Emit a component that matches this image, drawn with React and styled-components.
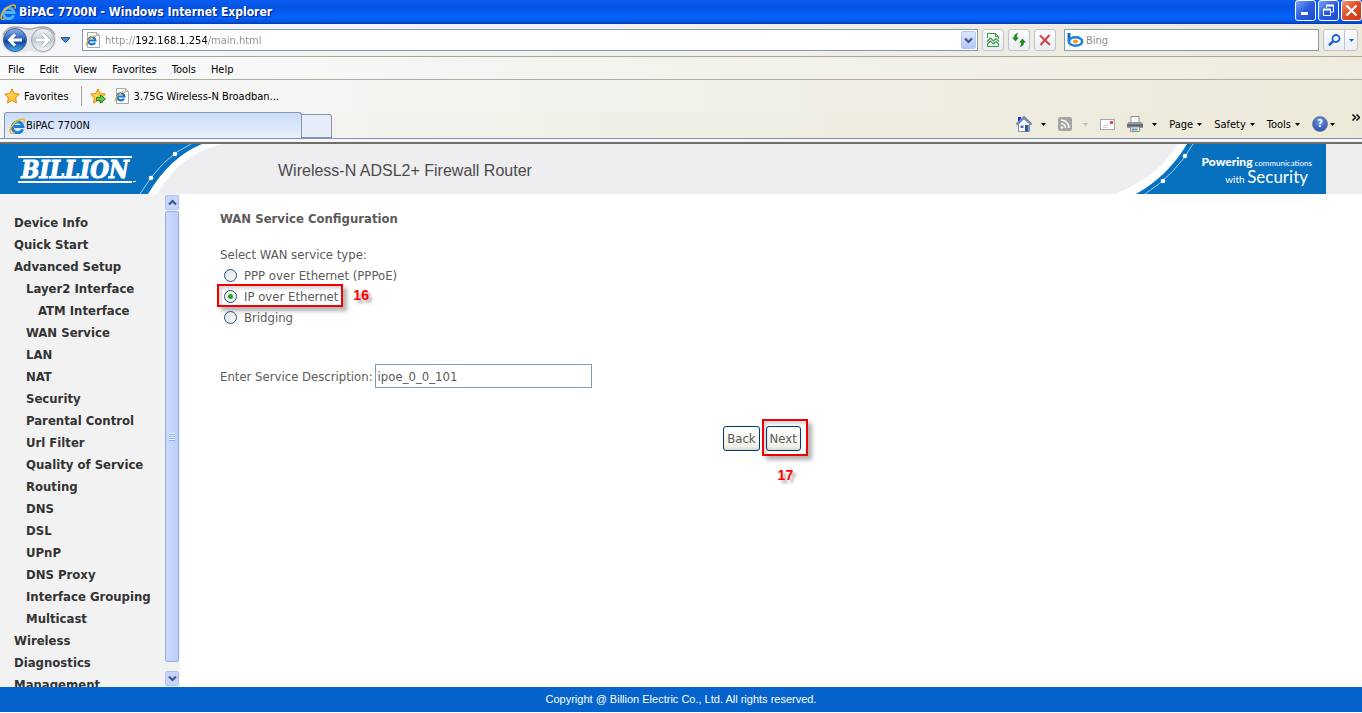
import { useState } from "react";
import styled, { createGlobalStyle } from "styled-components";

const tahoma = `"DejaVu Sans Condensed", "Noto Sans", sans-serif`;
const arial = `"Liberation Sans", sans-serif`;

const menus = ["File", "Edit", "View", "Favorites", "Tools", "Help"];

const sideLinks = [
  { name: "Device Info", level: 0 },
  { name: "Quick Start", level: 0 },
  { name: "Advanced Setup", level: 0 },
  { name: "Layer2 Interface", level: 1 },
  { name: "ATM Interface", level: 2 },
  { name: "WAN Service", level: 1 },
  { name: "LAN", level: 1 },
  { name: "NAT", level: 1 },
  { name: "Security", level: 1 },
  { name: "Parental Control", level: 1 },
  { name: "Url Filter", level: 1 },
  { name: "Quality of Service", level: 1 },
  { name: "Routing", level: 1 },
  { name: "DNS", level: 1 },
  { name: "DSL", level: 1 },
  { name: "UPnP", level: 1 },
  { name: "DNS Proxy", level: 1 },
  { name: "Interface Grouping", level: 1 },
  { name: "Multicast", level: 1 },
  { name: "Wireless", level: 0 },
  { name: "Diagnostics", level: 0 },
  { name: "Management", level: 0 },
];

const services = [
  { id: "pppoe", label: "PPP over Ethernet (PPPoE)" },
  { id: "ipoe", label: "IP over Ethernet", step: "16" },
  { id: "bridge", label: "Bridging" },
];

const IeIcon = ({ color = "#1b7fd6" }) => (
  <svg width="16" height="16" viewBox="0 0 16 16" fill="none">
    <path d="M13.700 11.200A5.400 5.400 0 1 1 14 8.600H5" stroke={color} strokeWidth="3" />
    <path d="M4.200 6.200A4.400 4.400 0 0 1 8.600 3.200" stroke="#a6dcfa" strokeWidth="1" />
    <path
      d="M1.600 15C-.4 12.500 3 6.500 8 3.200 11.500.8 15 .2 15.300 2.200c.1.800-.3 1.700-.8 2.500"
      stroke="#f0b323"
      strokeWidth="1.500"
    />
    <path d="M1.600 15c1 .7 2.700.2 4-.8" stroke="#f0b323" strokeWidth="1.300" />
  </svg>
);

const PageIcon = () => (
  <svg width="16" height="16" viewBox="0 0 16 16" fill="none">
    <path d="M2.500.5h9l3 3v12h-12z" fill="#fff" stroke="#a3a9b3" />
    <path d="M11.500.5v3h3" stroke="#a3a9b3" />
    <path d="M10 10.500A3.600 3.600 0 1 1 10.400 8.500H4" stroke="#1b74d0" strokeWidth="2.200" />
    <path d="M1.400 13.500C.5 11.500 3 7.500 6.500 5.200c2.500-1.700 4.500-1.700 4.300-.2" stroke="#efb128" strokeWidth="1.200" />
  </svg>
);

const StarIcon = ({ arrow }) => (
  <svg width="16" height="16" viewBox="0 0 16 16">
    <path
      d="M8 .8l2.200 4.700 5.200.7-3.800 3.600.9 5.200L8 12.500 3.500 15l.9-5.200L.6 6.200l5.200-.7z"
      fill="#ffc63a"
      stroke="#d98c14"
    />
    <path d="M8 3L6.700 6.500 3.500 7 7 7.800z" fill="#fff0a8" />
    {arrow && <path d="M6.500 9.500h4v-2.500l5 4-5 4v-2.500h-4z" fill="#5fd04b" stroke="#1c8a1c" />}
  </svg>
);

const NavCircles = () => (
  <svg width="56" height="30" viewBox="0 0 56 30" fill="none">
    <defs>
      <linearGradient id="backFill" x1="0" y1="0" x2="0" y2="1">
        <stop offset="0" stopColor="#8fb4e8" />
        <stop offset=".45" stopColor="#2a63bd" />
        <stop offset=".55" stopColor="#123f96" />
        <stop offset="1" stopColor="#46b0ef" />
      </linearGradient>
      <linearGradient id="nextFill" x1="0" y1="0" x2="0" y2="1">
        <stop offset="0" stopColor="#f6f8fa" />
        <stop offset=".5" stopColor="#c3cbd3" />
        <stop offset="1" stopColor="#f8fafc" />
      </linearGradient>
    </defs>
    <path
      d="M13 2C22 2 22 4 28 4S34 2 42 2a13 13 0 0 1 0 26C34 28 33 26 28 26S22 28 14 28A13 13 0 0 1 13 2z"
      fill="#e3e5e8"
    />
    <path d="M2 10C5 4 9 2 14 2c8 0 8 2 14 2s6-2 14-2c5 0 9 2 12 8" stroke="#a3a6aa" strokeWidth="1.500" />
    <circle cx="14" cy="15" r="11.500" fill="url(#backFill)" stroke="#3a659e" />
    <circle cx="42" cy="15" r="11.500" fill="url(#nextFill)" stroke="#9aa2ab" />
    <path d="M21 15H9M14 9.500L8.500 15l5.500 5.500" stroke="#fff" strokeWidth="3" />
    <path d="M35 15h12M42 9.500l5.500 5.500-5.500 5.500" stroke="#9aa2ab" strokeWidth="4" />
    <path d="M35 15h12M42 9.500l5.500 5.500-5.500 5.500" stroke="#fff" strokeWidth="2.800" />
  </svg>
);

const Chevron = ({ up }) => (
  <svg width="9" height="7" viewBox="0 0 9 7" fill="none">
    <path d={up ? "M1 5.500l3.500-3.500L8 5.500" : "M1 1.500L4.500 5 8 1.500"} stroke="#42598c" strokeWidth="2.200" />
  </svg>
);

const Caret = ({ color = "#000" }) => (
  <svg width="5" height="3" viewBox="0 0 5 3">
    <path d="M0 0h5L2.500 3z" fill={color} />
  </svg>
);

const RecentIcon = () => (
  <svg width="9" height="6" viewBox="0 0 9 6">
    <path d="M.5.500h8v1L4.500 5.500l-4-4z" fill="#3f8fd0" stroke="#1b4f86" />
  </svg>
);

const BrokenPageIcon = () => (
  <svg width="14" height="16" viewBox="0 0 14 16" fill="none" stroke="#3b9a3f">
    <path d="M1.500 6V1.500h8l3 3V7M9.500 1.500v3h3" />
    <path d="M1 9.500l3.500-3.500 3 3L10 6.500l3 3M1 12.500L4.500 9l3 3L10 9.500l3 3" strokeWidth="1.200" />
    <path d="M1.500 12v2.500h11V12" />
  </svg>
);

const RefreshIcon = () => (
  <svg width="14" height="14" viewBox="0 0 14 14" fill="#23892a">
    <path d="M6.500 0C3.500.3 2 2 2 4.500H0L3.500 8.500 7 4.500H5C4.800 2.500 5.200 1.200 6.500 0z" />
    <path d="M7.500 14c3-.3 4.500-2 4.500-4.500H14L10.500 5.500 7 9.500h2c.2 2-.2 3.300-1.500 4.500z" />
  </svg>
);

const StopIcon = () => (
  <svg width="12" height="12" viewBox="0 0 12 12" fill="none">
    <path d="M1 1.500l10 9.500M10.500 1L1.500 11" stroke="#cf4343" strokeWidth="2" />
  </svg>
);

const BingIcon = () => (
  <svg width="17" height="14" viewBox="0 0 17 14" fill="none">
    <path d="M2 0v8.500" stroke="#1767cf" strokeWidth="3" />
    <ellipse cx="8.500" cy="8.500" rx="6.700" ry="4.200" stroke="#1c82dc" strokeWidth="2.500" />
    <ellipse cx="8.500" cy="8.500" rx="2.600" ry="2" fill="#f59a1c" />
  </svg>
);

const SearchIcon = () => (
  <svg width="13" height="12" viewBox="0 0 13 12" fill="none" stroke="#1c5fd6">
    <circle cx="8" cy="4.500" r="3.500" strokeWidth="1.800" />
    <path d="M5.300 7L1 11.300" strokeWidth="2.500" />
  </svg>
);

const HomeIcon = () => (
  <svg width="16" height="16" viewBox="0 0 16 16">
    <path d="M2 1h3v5H2z" fill="#2433d0" />
    <path d="M2.500 8L8 3l5.500 5v7.500h-11z" fill="#fff" stroke="#7f8db0" />
    <path d="M.5 8.500L8 1l7.500 7.500" fill="none" stroke="#6d86b8" strokeWidth="2" />
    <path d="M9 9h3.500v6.500H9z" fill="#33559c" />
    <path d="M4.500 9.500h3v2.500h-3z" fill="#4a6bb4" />
  </svg>
);

const FeedIcon = () => (
  <svg width="14" height="14" viewBox="0 0 14 14" fill="none">
    <rect width="14" height="14" rx="2" fill="#a5a5a3" />
    <circle cx="4" cy="10.500" r="1.300" fill="#fff" />
    <path d="M3 6.500a4.500 4.500 0 0 1 4.500 4.500M3 3a8 8 0 0 1 8 8" stroke="#fff" strokeWidth="1.500" />
  </svg>
);

const MailIcon = () => (
  <svg width="15" height="11" viewBox="0 0 15 11" fill="none">
    <rect x=".5" y=".5" width="14" height="10" fill="#fdfdfd" stroke="#a7a7b0" />
    <path d="M3 6.500h5M3 8.500h4" stroke="#d4d4da" />
    <path d="M10 2h3v3h-3z" fill="#d9534f" />
  </svg>
);

const PrintIcon = () => (
  <svg width="16" height="16" viewBox="0 0 16 16">
    <path d="M4 .5h8V7H4z" fill="#fff" stroke="#8a8f98" />
    <path d="M1.500 6h13L16 8v4H0V8z" fill="#9599a0" />
    <path d="M0 8.500h16v2H0z" fill="#5b5f66" />
    <path d="M3.500 11h9v4.500h-9z" fill="#fff" stroke="#8a8f98" />
    <path d="M5 12.500h2.500v2H5z" fill="#3b76c8" />
    <path d="M8 12.500h2.500v2H8z" fill="#49a64b" />
  </svg>
);

const MinimizeIcon = () => (
  <svg width="13" height="13" viewBox="0 0 13 13">
    <path d="M2 8h7v3H2z" fill="#fff" />
  </svg>
);

const RestoreIcon = () => (
  <svg width="13" height="13" viewBox="0 0 13 13" fill="none" stroke="#fff">
    <path d="M4.500 4V1.500h7V8H9" />
    <path d="M4 1.500h8" strokeWidth="2" />
    <path d="M1.500 5.500h7v6h-7z" />
    <path d="M1 5.500h8" strokeWidth="2" />
  </svg>
);

const CloseIcon = () => (
  <svg width="13" height="13" viewBox="0 0 13 13" fill="none">
    <path d="M1.500 1.500l10 10M11.500 1.500l-10 10" stroke="#fff" strokeWidth="2.200" />
  </svg>
);

const App = () => {
  const [service, setService] = useState("ipoe");
  const [description, setDescription] = useState("ipoe_0_0_101");
  const [url, setUrl] = useState("http://192.168.1.254/main.html");

  return (
    <Window>
      <GlobalStyle />
      <TitleBar>
        <IeIcon color="#4fb4f2" />
        <WindowTitle>BiPAC 7700N - Windows Internet Explorer</WindowTitle>
        <WindowButton aria-label="Minimize">
          <MinimizeIcon />
        </WindowButton>
        <WindowButton aria-label="Restore">
          <RestoreIcon />
        </WindowButton>
        <WindowButton aria-label="Close" $danger>
          <CloseIcon />
        </WindowButton>
      </TitleBar>

      <NavBar>
        <NavCircles />
        <RecentButton aria-label="Recent pages">
          <RecentIcon />
        </RecentButton>
        <AddressBox>
          <PageIcon />
          <UrlInput aria-label="Address" value={url} onChange={(e) => setUrl(e.target.value)} />
          <DropButton aria-label="Show addresses">
            <Chevron />
          </DropButton>
        </AddressBox>
        <ToolButton aria-label="Compatibility view">
          <BrokenPageIcon />
        </ToolButton>
        <ToolButton aria-label="Refresh">
          <RefreshIcon />
        </ToolButton>
        <ToolButton aria-label="Stop">
          <StopIcon />
        </ToolButton>
        <SearchBox>
          <BingIcon />
          <SearchInput aria-label="Search" placeholder="Bing" />
        </SearchBox>
        <SearchButtons>
          <SearchButton aria-label="Search">
            <SearchIcon />
          </SearchButton>
          <SearchButton aria-label="Search options" $narrow>
            <Caret color="#1c5fd6" />
          </SearchButton>
        </SearchButtons>
      </NavBar>

      <MenuBar>
        {menus.map((menu) => (
          <PlainButton key={menu}>{menu}</PlainButton>
        ))}
      </MenuBar>

      <FavoritesBar>
        <PlainButton>
          <StarIcon />
          Favorites
        </PlainButton>
        <Separator />
        <PlainButton aria-label="Add to favorites">
          <StarIcon arrow />
        </PlainButton>
        <BarLink href="#broadband">
          <PageIcon />
          3.75G Wireless-N Broadban...
        </BarLink>
      </FavoritesBar>

      <TabBar>
        <Tab>
          <IeIcon />
          BiPAC 7700N
        </Tab>
        <NewTab aria-label="New tab" />
        <Commands>
          <CommandButton aria-label="Home" $gap={9}>
            <HomeIcon />
            <Caret />
          </CommandButton>
          <CommandButton aria-label="Feeds" $gap={11}>
            <FeedIcon />
            <Caret color="#b9b7ab" />
          </CommandButton>
          <CommandButton aria-label="Read mail">
            <MailIcon />
          </CommandButton>
          <CommandButton aria-label="Print" $gap={9}>
            <PrintIcon />
            <Caret />
          </CommandButton>
          <CommandButton>
            Page
            <Caret />
          </CommandButton>
          <CommandButton>
            Safety
            <Caret />
          </CommandButton>
          <CommandButton>
            Tools
            <Caret />
          </CommandButton>
          <CommandButton aria-label="Help" $gap={2}>
            <HelpBall>?</HelpBall>
            <Caret />
          </CommandButton>
        </Commands>
        <MoreButton aria-label="More commands">
          <svg width="8" height="7" viewBox="0 0 8 7" fill="none" stroke="#000" strokeWidth="1.500">
            <path d="M.5.500l3 3-3 3M4.500.500l3 3-3 3" />
          </svg>
        </MoreButton>
      </TabBar>

      <Header>
        <Brand>
          <BannerArt width="226" height="50" viewBox="0 0 226 50" fill="none">
            <path d="M0 0h222Q180 10 157 50H0z" fill="#fff" />
            <path d="M0 0h202Q170 13 148 50H0z" fill="#0771c0" />
            <path d="M191 0Q162 13 140 50" stroke="#9fd0f0" />
            <circle cx="175" cy="10" r="2.300" fill="#fff" />
            <circle cx="151" cy="34" r="2.300" fill="#fff" />
            <path d="M133 37.500h3" stroke="#fff" />
          </BannerArt>
          <Logo>BILLION</Logo>
        </Brand>
        <ProductName>Wireless-N ADSL2+ Firewall Router</ProductName>
        <Slogan>
          <BannerArt width="211" height="50" viewBox="0 0 211 50" fill="none">
            <path d="M0 50Q44 32 63 0h148v50z" fill="#fff" />
            <path d="M21 50Q53 32 72 0h139v50z" fill="#0771c0" />
            <path d="M30 50Q61 30 78 0" stroke="#9fd0f0" />
            <circle cx="70" cy="12" r="2.300" fill="#fff" />
            <circle cx="48" cy="37" r="2.300" fill="#fff" />
          </BannerArt>
          <SloganLine>
            <b>Powering</b> communications
          </SloganLine>
          <SloganLine $low>
            with <big>Security</big>
          </SloganLine>
        </Slogan>
      </Header>

      <Body>
        <SideMenu>
          {sideLinks.map(({ name, level }) => (
            <SideLink key={name} href="#menu" $level={level}>
              {name}
            </SideLink>
          ))}
        </SideMenu>
        <ScrollBar>
          <ScrollButton aria-label="Scroll up">
            <Chevron up />
          </ScrollButton>
          <Thumb>
            <Grip />
          </Thumb>
          <ScrollButton aria-label="Scroll down">
            <Chevron />
          </ScrollButton>
        </ScrollBar>

        <Content>
          <Heading>WAN Service Configuration</Heading>
          <Options>
            <legend>Select WAN service type:</legend>
            {services.map(({ id, label, step }) => (
              <Option key={id}>
                <Radio
                  type="radio"
                  name="service"
                  id={id}
                  checked={service === id}
                  onChange={() => setService(id)}
                />
                <label htmlFor={id}>{label}</label>
                {step && <OptionMark />}
                {step && <OptionStep>{step}</OptionStep>}
              </Option>
            ))}
          </Options>
          <Field>
            <label htmlFor="description">Enter Service Description:</label>
            <TextInput id="description" value={description} onChange={(e) => setDescription(e.target.value)} />
          </Field>
          <Actions>
            <FormButton>Back</FormButton>
            <Marked>
              <FormButton>Next</FormButton>
              <ButtonMark />
              <ButtonStep>17</ButtonStep>
            </Marked>
          </Actions>
        </Content>
      </Body>

      <Footer>Copyright @ Billion Electric Co., Ltd. All rights reserved.</Footer>
    </Window>
  );
};

export default App;

const GlobalStyle = createGlobalStyle`
  * {
    box-sizing: border-box;
  }
  body {
    margin: 0;
    background: #fff;
  }
  button, input {
    font: inherit;
    color: inherit;
  }
  svg {
    display: block;
    flex-shrink: 0;
  }
`;

const Window = styled.div`
  display: flex;
  flex-direction: column;
  height: 100vh;
  padding-bottom: 1px;
  font-family: ${tahoma};
  font-size: 11px;
  color: #000;
`;

const TitleBar = styled.div`
  display: flex;
  align-items: center;
  gap: 2px;
  height: 24px;
  flex-shrink: 0;
  background: linear-gradient(#0a5cf0, #0553e4 30%, #0264fc 75%, #0450d8 92%, #0238b4);
`;

const WindowTitle = styled.h1`
  flex: 1;
  margin: 0 0 0 1px;
  font-size: 12px;
  font-weight: bold;
  color: #fff;
  text-shadow: 1px 1px 1px #0a1883;
`;

const WindowButton = styled.button`
  display: flex;
  align-items: center;
  justify-content: center;
  width: 21px;
  height: 21px;
  margin-bottom: 3px;
  padding: 0;
  border: 1px solid #fff;
  border-radius: 3px;
  background: ${({ $danger }) =>
    $danger
      ? "linear-gradient(135deg, #f0967a, #dd4a22 50%, #c53a12)"
      : "linear-gradient(135deg, #7ba2f5, #2a5ce0 50%, #1d4bcb)"};
`;

const NavBar = styled.div`
  display: flex;
  align-items: center;
  height: 33px;
  flex-shrink: 0;
  padding: 0 4px 0 1px;
  border-bottom: 1px solid #a8a699;
  background: linear-gradient(90deg, #f5f7fb, #f1f1ee 40%, #ece9d8);
`;

const PlainButton = styled.button`
  display: flex;
  align-items: center;
  gap: 4px;
  padding: 0;
  border: 0;
  background: none;
  white-space: nowrap;
`;

const RecentButton = styled(PlainButton)`
  margin: 0 12px 0 4px;
`;

const AddressBox = styled.div`
  display: flex;
  align-items: center;
  flex: 1;
  height: 22px;
  margin-right: 4px;
  padding-left: 2px;
  border: 1px solid #7f9db9;
  background: #fff;
`;

const UrlInput = styled.input`
  flex: 1;
  height: 18px;
  padding: 0;
  margin-left: 4px;
  border: 0;
  outline: 0;
  color: transparent;
  caret-color: #000;
  /* the host part of the address is darker than the rest */
  background: linear-gradient(90deg, #8d8d86 31px, #000 31px, #000 103px, #8d8d86 103px);
  background-clip: text;
`;

const DropButton = styled.button`
  display: flex;
  align-items: center;
  justify-content: center;
  width: 15px;
  height: 18px;
  margin-right: 1px;
  padding: 0;
  border: 1px solid #b7c9f5;
  border-radius: 2px;
  background: linear-gradient(#dce6fd, #b5c9f7);
`;

const ToolButton = styled.button`
  display: flex;
  align-items: center;
  justify-content: center;
  width: 22px;
  height: 22px;
  margin-right: 4px;
  padding: 0;
  border: 1px solid #bfc3cf;
  border-radius: 3px;
  background: linear-gradient(#fbfbfd, #eceef4);
`;

const SearchBox = styled.div`
  display: flex;
  align-items: center;
  gap: 2px;
  width: 255px;
  height: 22px;
  margin: 0 4px;
  padding-left: 2px;
  border: 1px solid #7f9db9;
  background: #fff;
`;

const SearchInput = styled.input`
  flex: 1;
  min-width: 0;
  padding: 0;
  border: 0;
  outline: 0;

  &::placeholder {
    color: #8d8d86;
  }
`;

const SearchButtons = styled.div`
  display: flex;
  height: 22px;
  border: 1px solid #bfc3cf;
  border-radius: 3px;
  background: linear-gradient(#fbfbfd, #eceef4);
`;

const SearchButton = styled.button`
  display: flex;
  align-items: center;
  justify-content: center;
  width: ${({ $narrow }) => ($narrow ? 13 : 20)}px;
  padding: 0;
  border: 0;
  border-left: ${({ $narrow }) => ($narrow ? "1px solid #bfc3cf" : 0)};
  background: none;
`;

const MenuBar = styled.div`
  display: flex;
  align-items: center;
  gap: 15px;
  height: 23px;
  flex-shrink: 0;
  padding: 2px 0 0 8px;
  border-bottom: 1px solid #b0ad9f;
  background: linear-gradient(90deg, #fafbfd, #f4f4f1 40%, #efecdd);
`;

const FavoritesBar = styled.div`
  display: flex;
  align-items: center;
  gap: 8px;
  height: 32px;
  flex-shrink: 0;
  padding-left: 4px;
  background: linear-gradient(90deg, #f8f9fb, #f3f2ed 40%, #ece9d8);
`;

const Separator = styled.span`
  width: 1px;
  height: 20px;
  margin-left: 4px;
  background: #a8a699;
`;

const BarLink = styled.a`
  display: flex;
  align-items: center;
  gap: 4px;
  color: #000;
  text-decoration: none;
`;

const TabBar = styled.div`
  display: flex;
  align-items: flex-end;
  height: 32px;
  flex-shrink: 0;
  padding: 0 2px 4px 4px;
  border-bottom: 2px solid #716f64;
  background: linear-gradient(#fff0 26px, #8a93a8 26px, #8a93a8 27px, #f2f5fb 27px),
    linear-gradient(90deg, #f6f7f9, #f1f0e9 40%, #ece9d8);
`;

const Tab = styled.button`
  display: flex;
  align-items: center;
  gap: 1px;
  width: 298px;
  height: 26px;
  padding: 0 4px;
  border: 1px solid #8a93a8;
  border-bottom: 0;
  border-radius: 3px 3px 0 0;
  background: linear-gradient(#c8dcf8, #e8f0fc);
`;

const NewTab = styled.button`
  width: 30px;
  height: 24px;
  border: 1px solid #8a93a8;
  border-left: 0;
  border-radius: 0 3px 0 0;
  background: #e6edf9;
`;

const Commands = styled.div`
  display: flex;
  align-items: center;
  gap: 12px;
  height: 28px;
  margin-left: auto;
`;

const CommandButton = styled(PlainButton)`
  gap: ${({ $gap = 4 }) => $gap}px;
`;

const HelpBall = styled.span`
  width: 16px;
  height: 16px;
  border: 1px solid #6f7f9f;
  border-radius: 50%;
  background: radial-gradient(circle at 50% 30%, #6f9bea, #1d3fa3);
  font-weight: bold;
  line-height: 14px;
  color: #fff;
`;

const MoreButton = styled(PlainButton)`
  align-self: flex-start;
  margin: 2px 0 0 17px;
`;

const Header = styled.header`
  display: flex;
  align-items: center;
  height: 50px;
  flex-shrink: 0;
  padding-right: 36px;
  background: #eeeef0;
`;

const BannerArt = styled.svg`
  position: absolute;
  top: 0;
  left: 0;
`;

const Brand = styled.div`
  position: relative;
  display: flex;
  align-items: center;
  width: 278px;
  height: 50px;
  padding-left: 18px;
`;

const Logo = styled.strong`
  position: relative;
  width: 114px;
  border-top: 2px solid #fff;
  border-bottom: 2px solid #fff;
  font: italic bold 24px/23px "DejaVu Serif Condensed", serif;
  text-align: center;
  color: #fff;
  -webkit-text-stroke: 1px #fff;
`;

const ProductName = styled.p`
  flex: 1;
  margin: 0;
  padding-top: 3px;
  font: 16px/20px ${arial};
  color: #4a4a4a;
`;

const Slogan = styled.div`
  position: relative;
  width: 211px;
  height: 50px;
  padding: 11px 14px 0 0;
  text-align: right;
  color: #fff;
`;

const SloganLine = styled.p`
  position: relative;
  margin: 0;
  padding-right: ${({ $low }) => ($low ? 4 : 0)}px;
  font: ${({ $low }) => ($low ? 10 : 8)}px/14px Lato, sans-serif;

  b {
    font-size: 12px;
    font-weight: 900;
  }
  big {
    font-size: 17px;
  }
`;

const Body = styled.div`
  display: flex;
  flex: 1;
  min-height: 0;
`;

const SideMenu = styled.nav`
  width: 164px;
  padding-top: 18px;
  overflow: hidden;
  background: #f2f2f2;
`;

const SideLink = styled.a`
  display: block;
  padding-left: ${({ $level }) => 14 + $level * 12}px;
  font-size: 13px;
  font-weight: bold;
  line-height: 22px;
  color: #333;
  text-decoration: none;
  white-space: nowrap;
`;

const ScrollBar = styled.div`
  display: flex;
  flex-direction: column;
  width: 16px;
  padding: 1px;
  background: #f3f2ec;
`;

const ScrollButton = styled.button`
  display: flex;
  align-items: center;
  justify-content: center;
  height: 15px;
  padding: 0;
  border: 1px solid #b0c3f0;
  border-radius: 2px;
  background: #c6d6fb;
`;

const Thumb = styled.div`
  display: flex;
  align-items: center;
  justify-content: center;
  flex: 1;
  margin: 1px 0 9px;
  border: 1px solid #98b0e8;
  border-radius: 2px;
  background: linear-gradient(90deg, #cbd9fd, #bccdf8);
`;

const Grip = styled.span`
  width: 6px;
  height: 8px;
  background: repeating-linear-gradient(#eef4fe 0 1px, #8cb0f8 1px 2px);
`;

const Content = styled.main`
  flex: 1;
  padding: 14px 58px 0 40px;
  font-size: 13px;
  line-height: 21px;
  color: #5b5b5b;
`;

const Heading = styled.h2`
  margin: 0 0 15px;
  font-size: 13px;
`;

const Options = styled.fieldset`
  margin: 0;
  padding: 0;
  border: 0;

  legend {
    padding: 0;
  }
`;

const Option = styled.div`
  position: relative;
  display: flex;
  align-items: center;
  gap: 7px;
  width: max-content;
  height: 21px;
  padding-left: 4px;
`;

const Radio = styled.input`
  appearance: none;
  width: 13px;
  height: 13px;
  margin: 0;
  border: 1px solid #1d5281;
  border-radius: 50%;
  background: linear-gradient(135deg, #dedede, #fff);

  &:checked {
    background: radial-gradient(circle, #21a121 2px, #f4f4f2 3px);
  }
`;

const Mark = styled.span`
  position: absolute;
  border: 2px solid #f00000;
  box-shadow: 4px 4px 4px rgba(0, 0, 0, 0.3), inset 3px 3px 3px rgba(0, 0, 0, 0.15);
  pointer-events: none;
`;

const OptionMark = styled(Mark)`
  inset: -2px -5px 0 -3px;
`;

const Step = styled.b`
  position: absolute;
  font: bold 14px/20px ${arial};
  color: #ff0000;
  text-shadow: 3px 3px 3px rgba(0, 0, 0, 0.35);
`;

const OptionStep = styled(Step)`
  top: -1px;
  left: calc(100% + 15px);
`;

const Field = styled.div`
  display: flex;
  align-items: center;
  gap: 2px;
  margin-top: 36px;
`;

const TextInput = styled.input`
  width: 217px;
  height: 24px;
  padding: 0 2px;
  border: 1px solid #7f9db9;
  background: #fff;
`;

const Actions = styled.div`
  display: flex;
  justify-content: center;
  gap: 6px;
  margin-top: 38px;
`;

const FormButton = styled.button`
  height: 25px;
  padding: 0 3px;
  border: 1px solid #003c74;
  border-radius: 3px;
  background: linear-gradient(#fff, #f0efe8 85%, #dcd8cf);
`;

const Marked = styled.div`
  position: relative;
`;

const ButtonMark = styled(Mark)`
  inset: -7px -7px -5px -4px;
`;

const ButtonStep = styled(Step)`
  top: 39px;
  left: 12px;
`;

const Footer = styled.footer`
  height: 25px;
  flex-shrink: 0;
  background: #0463cc;
  font: 11px/25px ${arial};
  text-align: center;
  color: #fff;
`;
